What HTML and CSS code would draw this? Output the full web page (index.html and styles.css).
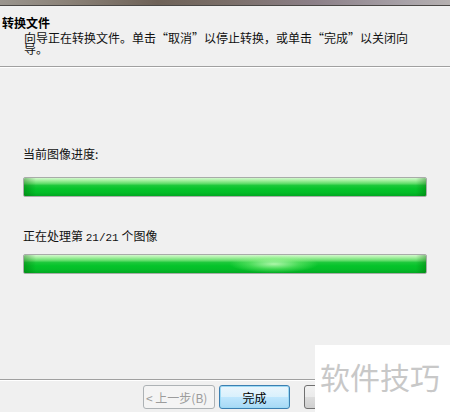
FILE: index.html
```html
<!DOCTYPE html>
<html lang="zh-CN">
<head>
<meta charset="utf-8">
<link rel="stylesheet" href="styles.css">
</head>
<body>
<div class="window">
  <div class="topstrip"></div>
  <div class="header">
    <div class="title">转换文件</div>
    <div class="desc">向导正在转换文件。单击“取消”以停止转换，或单击“完成”以关闭向导。</div>
  </div>
  <div class="main">
    <div class="label">当前图像进度:</div>
    <div class="bar"><div class="fill"></div></div>
    <div class="label label2">正在处理第 <span class="num">21/21</span> 个图像</div>
    <div class="bar bar2"><div class="fill"></div><div class="glow"></div></div>
  </div>
  <div class="footer">
    <div class="buttons">
      <button class="btn disabled">&lt; 上一步(B)</button>
      <button class="btn primary">完成</button>
      <button class="btn" aria-label="取消"></button>
    </div>
  </div>
  <div class="watermark">软件技巧</div>
</div>
</body>
</html>
```
FILE: styles.css
```css
html, body {
  margin: 0;
  padding: 0;
}
body {
  background: #f0f0f0;
  font-family: "Noto Sans CJK SC", "Liberation Sans", sans-serif;
  font-size: 12px;
  color: #000;
}
.window {
  position: relative;
  width: 450px;
  height: 412px;
  overflow: hidden;
  background: #f0f0f0;
}
.topstrip {
  height: 5px;
  background: linear-gradient(90deg, #9a958e 0%, #8b8278 15%, #6e6258 35%, #7a6e68 50%, #8c8088 70%, #a8a2a8 90%, #b5b0b0 100%);
  border-bottom: 1px solid #4a4846;
}
.header {
  height: 61px;
  padding: 10px 0 0 2px;
  box-sizing: border-box;
  border-bottom: 1px solid #a0a0a0;
  background: #f0f0f0;
}
.title {
  font-weight: bold;
  line-height: 14px;
  font-size: 12px;
}
.desc {
  margin-top: 2px;
  padding-left: 22px;
  width: 386px;
  font-size: 12px;
  line-height: 11px;
  color: #111;
}
.main {
  border-top: 1px solid #fff;
  padding: 79px 23px 0 23px;
}
.label {
  line-height: 14px;
  height: 14px;
  color: #111;
}
.num {
  font-family: "Liberation Mono", monospace;
  font-size: 11px;
}
.label2 {
  margin-top: 32px;
}
.bar {
  position: relative;
  margin-top: 16px;
  height: 20px;
  border: 1px solid #a8aca8;
  border-radius: 2px;
  box-sizing: border-box;
  overflow: hidden;
  background: #e6e6e6;
}
.bar2 {
  margin-top: 11px;
}
.fill {
  position: absolute;
  inset: 0;
  background:
    linear-gradient(90deg, rgba(0,90,0,0.35) 0, rgba(0,90,0,0) 12px, rgba(0,90,0,0) calc(100% - 10px), rgba(0,90,0,0.35) 100%),
    linear-gradient(180deg, #d4f8cf 0%, #a4f0a0 14%, #66de6e 30%, #1cc83a 42%, #05c42a 60%, #04bd28 80%, #02a822 100%);
}
.glow {
  position: absolute;
  top: 0;
  bottom: 0;
  left: 205px;
  width: 90px;
  background: radial-gradient(ellipse at center, rgba(200,255,190,0.85) 0%, rgba(150,250,140,0.4) 40%, rgba(120,240,120,0) 70%);
}
.footer {
  margin-top: 105px;
  border-top: 1px solid #a0a0a0;
}
.buttons {
  border-top: 1px solid #fff;
  display: flex;
  gap: 4px;
  padding: 4px 0 0 143px;
}
.btn {
  font-family: "Noto Sans CJK SC", "Liberation Sans", sans-serif;
  font-size: 12px;
  height: 24px;
  width: 73px;
  padding: 0;
  border: 1px solid #707070;
  border-radius: 3px;
  background: linear-gradient(180deg, #f2f2f2 0%, #ebebeb 50%, #dddddd 51%, #cfcfcf 100%);
  color: #000;
}
.btn.disabled {
  width: 72px;
  border-color: #adb2b5;
  background: #f4f4f4;
  color: #9c9c9c;
  text-align: left;
  padding-left: 2px;
}
.btn.primary {
  width: 71px;
  border-color: #3c7fb1;
  box-shadow: inset 0 0 0 1px #9ddaf5;
  background: linear-gradient(180deg, #eaf6fd 0%, #d9f0fc 50%, #bee6fd 51%, #a7d9f5 100%);
}
.btn.primary + .btn {
  margin-left: 10px;
  width: 75px;
}
.watermark {
  position: absolute;
  right: 0;
  bottom: 0;
  width: 135px;
  height: 67px;
  background: #fff;
  color: #c8c8c8;
  font-size: 30px;
  line-height: 30px;
  padding: 16px 0 0 5px;
  box-sizing: border-box;
  white-space: nowrap;
}
```
